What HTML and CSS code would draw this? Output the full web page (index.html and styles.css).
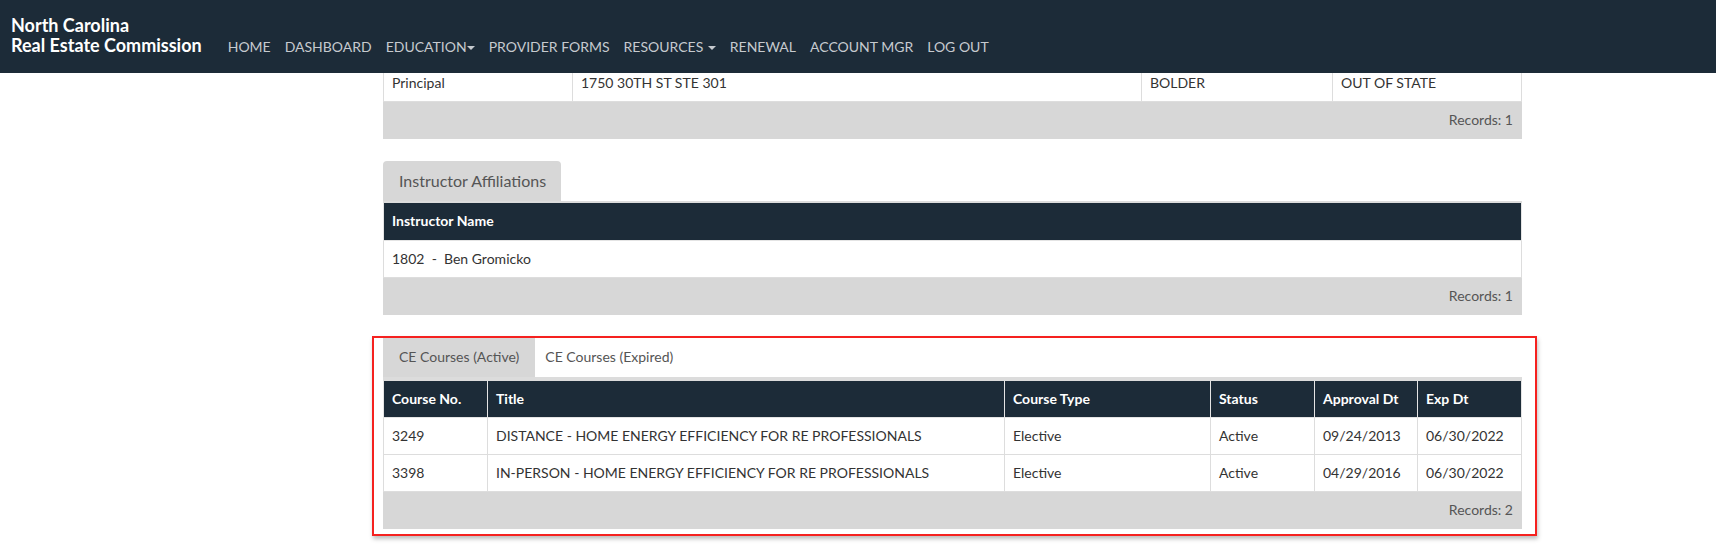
FILE: index.html
```html
<!doctype html>
<html lang="en">
  <head>
    <meta charset="UTF-8" />
    <meta name="viewport" content="width=device-width, initial-scale=1.0" />
    <title>Provider - NC Real Estate Commission</title>
    <link rel="stylesheet" href="styles.css">
  </head>
  <body>
    <nav class="navbar">
      <div class="brand">North Carolina<br>Real Estate Commission</div>
      <ul class="nav-links">
        <li><a href="#">HOME</a></li>
        <li><a href="#">DASHBOARD</a></li>
        <li><a href="#">EDUCATION<span class="caret tight"></span></a></li>
        <li><a href="#">PROVIDER FORMS</a></li>
        <li><a href="#">RESOURCES <span class="caret"></span></a></li>
        <li><a href="#">RENEWAL</a></li>
        <li><a href="#">ACCOUNT MGR</a></li>
        <li><a href="#">LOG OUT</a></li>
      </ul>
    </nav>

    <main class="content">
      <!-- locations (scrolled) -->
      <table class="grid grid-locations">
        <colgroup>
          <col style="width: 189px">
          <col style="width: 569px">
          <col style="width: 191px">
          <col>
        </colgroup>
        <tbody>
          <tr class="cut-row">
            <td>Principal</td>
            <td>1750 30TH ST STE 301</td>
            <td>BOLDER</td>
            <td>OUT OF STATE</td>
          </tr>
        </tbody>
        <tfoot>
          <tr><td colspan="4">Records: 1</td></tr>
        </tfoot>
      </table>

      <section class="panel">
        <ul class="tabs">
          <li class="tab active big">Instructor Affiliations</li>
        </ul>
        <table class="grid">
          <thead>
            <tr><th>Instructor Name</th></tr>
          </thead>
          <tbody>
            <tr><td>1802&nbsp; - &nbsp;Ben Gromicko</td></tr>
          </tbody>
          <tfoot>
            <tr><td>Records: 1</td></tr>
          </tfoot>
        </table>
      </section>

      <section class="panel highlighted">
        <ul class="tabs">
          <li class="tab active">CE Courses (Active)</li>
          <li class="tab">CE Courses (Expired)</li>
        </ul>
        <table class="grid">
          <colgroup>
            <col style="width: 104px">
            <col style="width: 517px">
            <col style="width: 206px">
            <col style="width: 104px">
            <col style="width: 103px">
            <col>
          </colgroup>
          <thead>
            <tr>
              <th>Course No.</th>
              <th>Title</th>
              <th>Course Type</th>
              <th>Status</th>
              <th>Approval Dt</th>
              <th>Exp Dt</th>
            </tr>
          </thead>
          <tbody>
            <tr>
              <td>3249</td>
              <td>DISTANCE - HOME ENERGY EFFICIENCY FOR RE PROFESSIONALS</td>
              <td>Elective</td>
              <td>Active</td>
              <td>09/24/2013</td>
              <td>06/30/2022</td>
            </tr>
            <tr>
              <td>3398</td>
              <td>IN-PERSON - HOME ENERGY EFFICIENCY FOR RE PROFESSIONALS</td>
              <td>Elective</td>
              <td>Active</td>
              <td>04/29/2016</td>
              <td>06/30/2022</td>
            </tr>
          </tbody>
          <tfoot>
            <tr><td colspan="6">Records: 2</td></tr>
          </tfoot>
        </table>
      </section>
    </main>
  </body>
</html>
```

FILE: styles.css
```css
* {
  margin: 0;
  padding: 0;
  box-sizing: border-box;
}

body {
  font-family: Lato, "Open Sans", sans-serif;
  font-size: 14px;
  line-height: 20px;
  color: #333;
  background: #fff;
}

/* top bar */
.navbar {
  height: 73px;
  background: #1c2b38;
  display: flex;
  align-items: center;
  padding: 0 11px;
}

.brand {
  color: #fff;
  font-size: 18px;
  font-weight: 700;
  line-height: 20px;
  margin-top: -3px;
  margin-right: 19px;
}

.nav-links {
  list-style: none;
  display: flex;
  padding-top: 20px;
}

.nav-links a {
  display: block;
  padding: 0 7px;
  color: #c6cacf;
  text-decoration: none;
  font-size: 14px;
}

.caret {
  display: inline-block;
  width: 0;
  height: 0;
  border-top: 4px solid #c6cacf;
  border-left: 4px solid transparent;
  border-right: 4px solid transparent;
  vertical-align: middle;
  margin-left: 1px;
}

.caret.tight {
  margin-left: 0;
}

/* page body */
.content {
  width: 1139px;
  margin-left: 383px;
}

.grid {
  width: 100%;
  border-collapse: collapse;
  table-layout: fixed;
}

.grid th,
.grid td {
  padding: 8px 8px;
  text-align: left;
  border: 1px solid #ddd;
  height: 37px;
  vertical-align: middle;
}

.grid th {
  background: #1c2b38;
  color: #fff;
  font-weight: 700;
  border-color: #e4e4e4;
  border-top: none;
}

.grid tbody td {
  background: #fff;
}

.grid tfoot td {
  background: #d7d7d7;
  color: #555;
  text-align: right;
  border-color: #d7d7d7;
}

.grid-locations .cut-row td {
  padding-top: 0;
  height: 26px;
  border-top: none;
}

.grid-locations {
  margin-bottom: 22px;
}

/* tabbed panels */
.panel {
  margin-bottom: 21px;
}

.tabs {
  list-style: none;
  display: flex;
  border-bottom: 2px solid #dcdcdc;
}

.tab {
  padding: 9px 10px 10px;
  color: #555;
  font-size: 14px;
}

.tab.active {
  background: #d7d7d7;
  padding: 9px 16px 10px;
  border-radius: 4px 4px 0 0;
}

.tab.big {
  font-size: 16px;
  padding: 10px 15px 10px 16px;
}

.highlighted {
  width: 1165px;
  margin-left: -11px;
  padding: 0 13px 5px 9px;
  border: 2px solid #f5211f;
  box-shadow: 1px 3px 4px rgba(0, 0, 0, 0.25);
}

.highlighted .tab.active {
  border-radius: 0;
}

.highlighted .tabs {
  border-bottom-width: 4px;
}
```
